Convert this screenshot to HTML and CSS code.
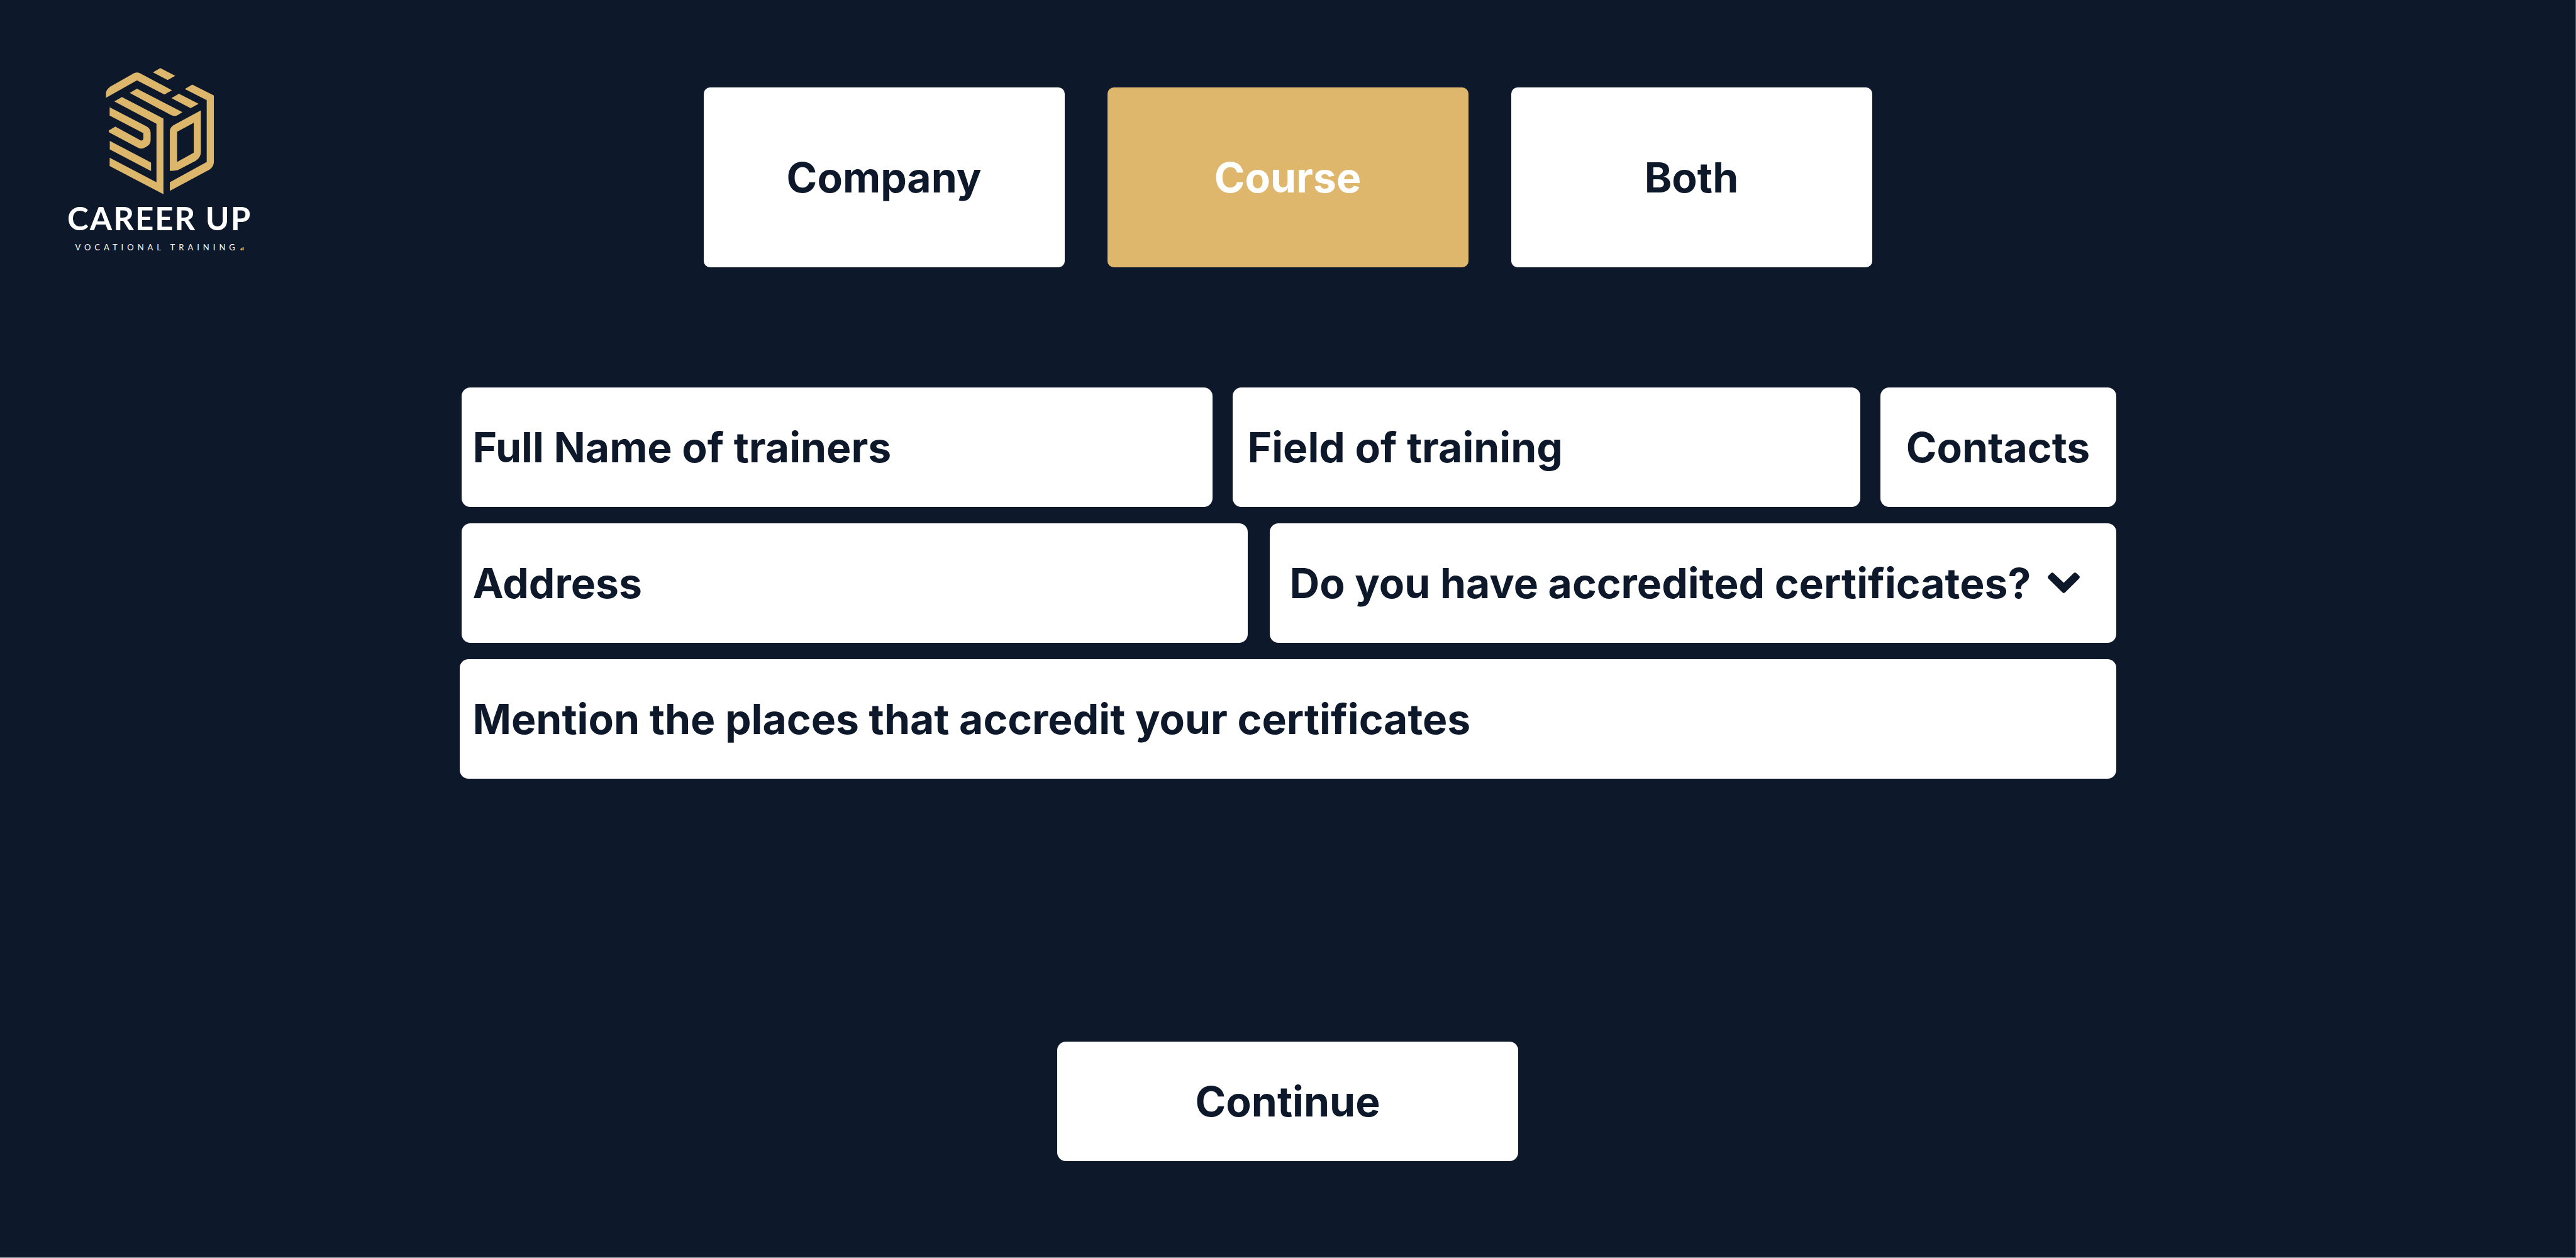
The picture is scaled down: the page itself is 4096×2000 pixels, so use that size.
FILE: index.html
```html
<!DOCTYPE html>
<html lang="en">
<head>
  <meta charset="utf-8">
  <meta name="viewport" content="width=device-width, initial-scale=1">
  <title>Career Up Vocational Training</title>
  <link rel="stylesheet" href="styles.css">
</head>
<body>
  <div class="page">
    <header class="header">
      <a class="logo" href="#" aria-label="Career Up Vocational Training">
        <svg class="logo-mark" viewBox="320 88 760 887" aria-hidden="true">
          <path d="M652 118L704 88L809 143L756 173Z"/>
          <path d="M322 297V262Q325 240 352 219L520 124Q540 115 560 124L786 244L733 274L540 175Z"/>
          <path d="M489 263L540 233L859 398L827 419Q806 430 780 419Z"/>
          <path d="M782 299L835 269L973 339L917 370Z"/>
          <path d="M876 235L929 204L1081 281V745Q1079 783 1049 802L771 951V891L1030 748V314Z"/>
          <path d="M381 323L434 292L726 443V975L348 777V718L677 890V480Z"/>
          <path d="M348 364L606 497Q636 513 636 545V597Q634 628 608 640L590 650Q570 659 548 649L343 539V526L388 500L566 597Q583 600 585 580V546L348 422Z"/>
          <path d="M349 600L639 752V812L349 660Z"/>
          <path fill-rule="evenodd" d="M989 386V680Q988 720 950 741L833 802Q820 809 771 811V533Q771 506 797 490ZM939 473L822 536V748L939 683Z"/>
        </svg>
        <span class="logo-name">CAREER UP</span>
        <span class="logo-tagline">VOCATIONAL TRAINING
          <svg class="logo-dot" viewBox="0 0 26 22" aria-hidden="true"><path d="M0 13L10 6L13 12V22H4ZM15 2L24 0V22H15Z"/></svg>
        </span>
      </a>
      <nav class="tabs" aria-label="Registration type">
        <button class="tab" type="button">Company</button>
        <button class="tab tab-active" type="button" aria-current="true">Course</button>
        <button class="tab" type="button">Both</button>
      </nav>
    </header>

    <form class="form">
      <div class="row row-trainer">
        <input class="field" type="text" placeholder="Full Name of trainers" aria-label="Full Name of trainers">
        <input class="field field-training" type="text" placeholder="Field of training" aria-label="Field of training">
        <input class="field field-contacts" type="text" placeholder="Contacts" aria-label="Contacts">
      </div>
      <div class="row row-address">
        <input class="field" type="text" placeholder="Address" aria-label="Address">
        <div class="select">
          <select class="field field-select" aria-label="Do you have accredited certificates?">
            <option>Do you have accredited certificates?</option>
            <option>Yes</option>
            <option>No</option>
          </select>
          <svg class="chevron" viewBox="0 0 224 145" aria-hidden="true"><path d="M4 24L23 5Q32 -3 41 5L112 72L181 5Q191 -3 200 5L220 24Q227 33 220 42L122 140Q112 149 102 140L4 43Q-4 33 4 24Z"/></svg>
        </div>
      </div>
      <div class="row">
        <input class="field field-places" type="text" placeholder="Mention the places that accredit your certificates" aria-label="Mention the places that accredit your certificates">
      </div>
      <button class="continue" type="submit">Continue</button>
    </form>
  </div>
</body>
</html>
```
FILE: styles.css
```css
:root {
  --navy: #0d182b;
  --gold: #dfb76c;
  --white: #ffffff;
}

* {
  box-sizing: border-box;
}

body {
  margin: 0;
  background: var(--navy);
  color: var(--navy);
  font-family: Inter, "Liberation Sans", sans-serif;
}

.page {
  min-height: 100vh;
  padding-top: 108px;
  border-right: 1px solid #5c6377;
  border-bottom: 1px solid #a4a8b0;
}

.header {
  display: grid;
  grid-template-columns: 1fr minmax(0, 1858px) 1fr;
  align-items: start;
}

.logo {
  display: flex;
  flex-direction: column;
  align-items: center;
  justify-self: start;
  margin-left: 107px;
  color: var(--white);
  font-family: Lato, "Open Sans", sans-serif;
  text-decoration: none;
  white-space: nowrap;
}

.logo-mark {
  width: 172px;
  height: 201px;
  fill: #dbb66b;
}

.logo-name {
  margin-top: 8px;
  font-size: 51px;
  font-weight: 700;
  line-height: 60px;
  letter-spacing: 2px;
}

.logo-tagline {
  display: flex;
  align-items: baseline;
  gap: 2px;
  margin-top: 8px;
  font-size: 13px;
  line-height: 16px;
  letter-spacing: 6px;
}

.logo-dot {
  width: 6px;
  height: 5px;
  fill: var(--gold);
}

.tabs {
  display: grid;
  grid-template-columns: repeat(3, minmax(0, 1fr));
  gap: 68px;
  margin-top: 31px;
}

.tab,
.field,
.continue {
  border: 0;
  background: var(--white);
  color: var(--navy);
  font-family: inherit;
  font-size: 66px;
  font-weight: 700;
}

.tab {
  height: 286px;
  border-radius: 10px;
}

.tab-active {
  background: var(--gold);
  color: var(--white);
}

.form {
  display: flex;
  flex-direction: column;
  gap: 26px;
  max-width: 2634px;
  margin: 191px auto 0;
}

.row {
  display: grid;
}

.row-trainer {
  grid-template-columns: minmax(0, 1194fr) minmax(0, 998fr) minmax(0, 375fr);
  gap: 32px;
  padding-left: 3px;
}

.row-address {
  grid-template-columns: minmax(0, 1250fr) minmax(0, 1346fr);
  gap: 35px;
  padding-left: 3px;
}

.field {
  width: 100%;
  height: 190px;
  padding: 0 18px;
  border-radius: 14px;
}

.field::placeholder {
  color: var(--navy);
  opacity: 1;
}

.field-training {
  padding: 0 24px;
}

.field-places {
  padding: 0 21px;
}

.field-contacts {
  text-align: center;
}

.select {
  position: relative;
}

.field-select {
  padding: 0 32px;
  appearance: none;
}

.chevron {
  position: absolute;
  top: 50%;
  right: 58px;
  width: 51px;
  height: 33px;
  margin-top: -17px;
  fill: var(--navy);
  pointer-events: none;
}

.continue {
  align-self: center;
  width: 733px;
  height: 190px;
  margin-top: 392px;
  border-radius: 14px;
}
```
